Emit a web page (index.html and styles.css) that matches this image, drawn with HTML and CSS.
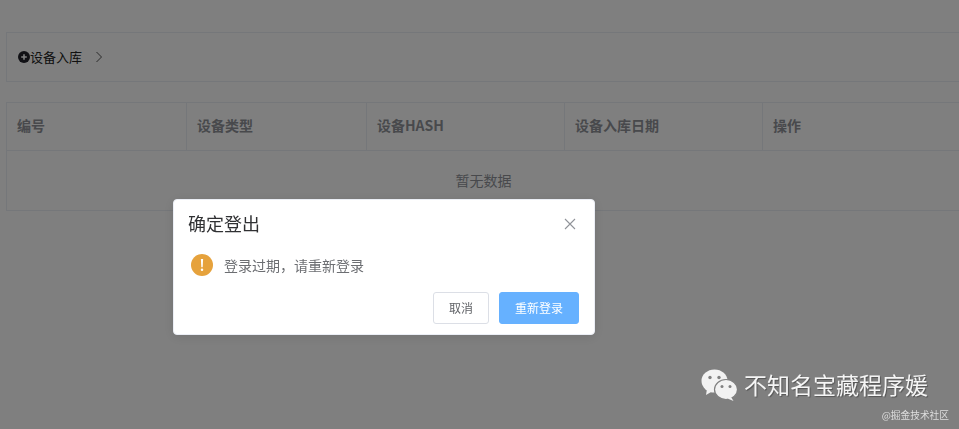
FILE: index.html
```html
<!DOCTYPE html>
<html lang="zh-CN">
<head>
<meta charset="utf-8">
<title>设备入库</title>
<link rel="stylesheet" href="styles.css">
</head>
<body>
<main class="page">
  <section class="panel">
    <svg class="plus" viewBox="0 0 12 12"><circle cx="6" cy="6" r="6" fill="#23232b"/><path d="M6 3.2v5.6M3.2 6h5.6" stroke="#fff" stroke-width="1.6"/></svg>
    <span class="crumb">设备入库</span>
    <svg class="chev" viewBox="0 0 8 12"><path d="M1.5 1l5 5-5 5" fill="none" stroke="#555" stroke-width="1"/></svg>
  </section>
  <section class="table">
    <div class="row head">
      <div class="cell">编号</div>
      <div class="cell">设备类型</div>
      <div class="cell">设备HASH</div>
      <div class="cell">设备入库日期</div>
      <div class="cell">操作</div>
    </div>
    <div class="empty">暂无数据</div>
  </section>
</main>
<div class="overlay">
  <div class="dialog">
    <div class="dialog-head">
      <span class="dialog-title">确定登出</span>
      <svg class="close" viewBox="0 0 12 12"><path d="M1 1l10 10M11 1L1 11" stroke="#909399" stroke-width="1.1" fill="none"/></svg>
    </div>
    <div class="dialog-body">
      <svg class="warn" viewBox="0 0 22 22"><circle cx="11" cy="11" r="11" fill="#e6a23c"/><path d="M9.9 5h2.2l-.4 8.2h-1.4z" fill="#fff"/><circle cx="11" cy="15.8" r="1.25" fill="#fff"/></svg>
      <span class="dialog-msg">登录过期，请重新登录</span>
    </div>
    <div class="dialog-foot">
      <button class="btn">取消</button>
      <button class="btn primary">重新登录</button>
    </div>
  </div>
  <div class="mark">
    <div class="mark-line">
      <svg class="wechat" viewBox="0 0 36 32">
        <ellipse cx="13.5" cy="12" rx="13" ry="11.5" fill="#f2f2f2"/>
        <path d="M6 20l-1 6 6-3.5z" fill="#f2f2f2"/>
        <circle cx="9" cy="8.5" r="1.7" fill="#808080"/><circle cx="18" cy="8.5" r="1.7" fill="#808080"/>
        <ellipse cx="25" cy="20.5" rx="11.5" ry="10" fill="#f2f2f2" stroke="#808080" stroke-width="1.2"/>
        <path d="M30 28l2.5 4-6-2.5z" fill="#f2f2f2"/>
        <circle cx="21" cy="17.5" r="1.5" fill="#808080"/><circle cx="29" cy="17.5" r="1.5" fill="#808080"/>
      </svg>
      <span class="mark-name">不知名宝藏程序媛</span>
    </div>
    <div class="mark-sub">@掘金技术社区</div>
  </div>
</div>
</body>
</html>
```
FILE: styles.css
```css
* { box-sizing: border-box; }
html, body { margin: 0; height: 100%; overflow: hidden; }
body {
  background: #fff;
  color: #606266;
  font-family: "Noto Sans CJK SC", "Liberation Sans", sans-serif;
}
.page { width: 1000px; padding: 32px 0 0 6px; }
.panel {
  display: flex;
  align-items: center;
  height: 50px;
  padding: 0 0 1px 11px;
  border: 1px solid #ebeef5;
  font-size: 13px;
  color: #303133;
}
.plus { width: 12px; height: 12px; margin-top: 1px; }
.crumb { color: #222; line-height: 1; }
.chev { width: 8px; height: 12px; margin-left: 13px; }
.table { margin-top: 20px; border: 1px solid #ebeef5; font-size: 14px; }
.row { display: grid; grid-template-columns: 180px 180px 198px 198px 1fr; height: 48px; border-bottom: 1px solid #ebeef5; }
.cell {
  display: flex;
  align-items: center;
  padding: 0 0 4px 10px;
  border-right: 1px solid #ebeef5;
  font-weight: 700;
  color: #909399;
}
.empty { height: 59px; width: 953px; padding-bottom: 1px; display: flex; align-items: center; justify-content: center; color: #909399; font-size: 14px; }
.overlay {
  position: fixed;
  inset: 0;
  background: rgba(0, 0, 0, .5);
}
.dialog {
  position: absolute;
  left: 173px;
  top: 199px;
  width: 422px;
  height: 136px;
  background: #fff;
  border: 1px solid #ebeef5;
  border-radius: 4px;
  box-shadow: 0 2px 12px rgba(0, 0, 0, .1);
}
.dialog-head { display: flex; justify-content: space-between; align-items: center; padding: 9px 18px 0 14px; height: 37px; }
.dialog-title { font-size: 18px; line-height: 26px; color: #303133; }
.close { width: 12px; height: 12px; margin-top: 2px; }
.dialog-body { display: flex; align-items: center; padding: 17px 15px 0 17px; height: 39px; }
.warn { width: 22px; height: 22px; flex: none; }
.dialog-msg { margin-left: 11px; font-size: 14px; color: #6c6e72; line-height: 22px; }
.dialog-foot { display: flex; justify-content: flex-end; gap: 10px; padding: 16px 15px 0 0; }
.btn {
  height: 32px;
  padding: 0 15px;
  border: 1px solid #dcdfe6;
  border-radius: 3px;
  background: #fff;
  color: #606266;
  font: 12px/1 "Noto Sans CJK SC", "Liberation Sans", sans-serif;
}
.btn.primary { background: #66b1ff; border-color: #66b1ff; color: #fff; }
.mark { position: absolute; right: 10px; bottom: 8px; color: #f5f5f5; text-align: right; }
.mark-line { display: flex; align-items: center; margin-right: 21px; }
.wechat { width: 36px; height: 32px; margin-top: 2px; }
.mark-name { margin-left: 7px; font-size: 23px; line-height: 30px; white-space: nowrap; text-shadow: 1px 1px 1px rgba(0,0,0,.35); }
.mark-sub { font-size: 9.7px; line-height: 12px; margin-top: 8px; color: #ddd; }
```
